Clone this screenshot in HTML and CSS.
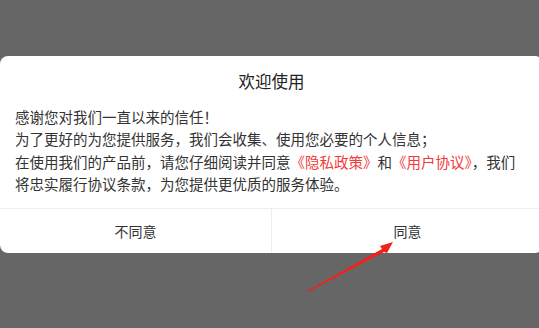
FILE: index.html
```html
<!DOCTYPE html>
<html lang="zh">
<head>
<meta charset="utf-8">
<link rel="stylesheet" href="styles.css">
</head>
<body>
<div class="dialog">
  <div class="title">欢迎使用</div>
  <div class="content">
    <p>感谢您对我们一直以来的信任！</p>
    <p>为了更好的为您提供服务，我们会收集、使用您必要的个人信息；</p>
    <p>在使用我们的产品前，请您仔细阅读并同意<span class="link">《隐私政策》</span>和<span class="link">《用户协议》</span>，我们将忠实履行协议条款，为您提供更优质的服务体验。</p>
  </div>
  <div class="footer">
    <div class="btn">不同意</div>
    <div class="btn">同意</div>
  </div>
</div>
<svg class="arrow" width="539" height="328" viewBox="0 0 539 328">
  <polygon points="307,291 382,249 380,246 393,242 387,253 384,252 308,292" fill="#f0231c"/>
</svg>
</body>
</html>
```
FILE: styles.css
```css
html, body {
  margin: 0;
  padding: 0;
}
body {
  background: #666666;
  width: 539px;
  height: 328px;
  overflow: hidden;
  position: relative;
  font-family: "Noto Sans CJK SC", "Noto Sans", sans-serif;
  color: #333333;
}
.dialog {
  margin-top: 56px;
  width: 543px;
  height: 197px;
  background: #ffffff;
  border-radius: 8px;
  display: flex;
  flex-direction: column;
  box-sizing: border-box;
}
.title {
  margin-top: 14px;
  height: 22px;
  line-height: 22px;
  font-size: 16.5px;
  text-align: center;
  color: #222222;
}
.content {
  padding: 14px 14px 13px 15px;
  font-size: 14.5px;
  line-height: 22.3px;
}
.content p {
  margin: 0;
}
.link {
  color: #f03a3a;
}
.footer {
  flex: 1;
  display: flex;
  border-top: 1px solid #eeeeee;
}
.btn {
  flex: 1;
  display: flex;
  align-items: center;
  justify-content: center;
  font-size: 14px;
  color: #333333;
}
.btn + .btn {
  border-left: 1px solid #eeeeee;
}
.arrow {
  position: absolute;
  left: 0;
  top: 0;
}
```
